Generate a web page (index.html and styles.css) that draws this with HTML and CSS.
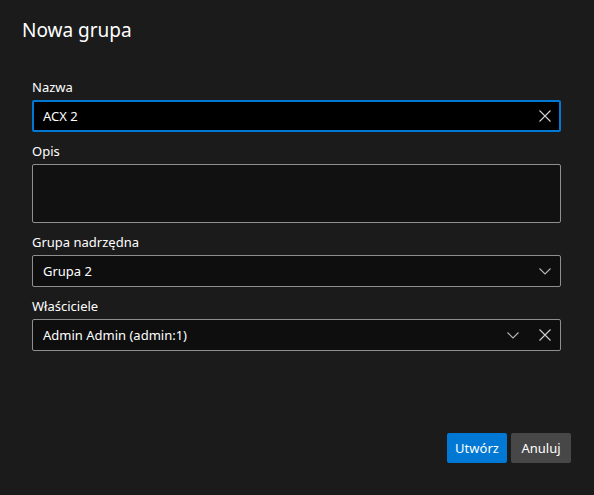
FILE: index.html
```html
<!DOCTYPE html>
<html lang="pl">
<head>
<meta charset="utf-8">
<title>Nowa grupa</title>
<link rel="stylesheet" href="styles.css">
</head>
<body>
<div class="dialog">
  <h1 class="title">Nowa grupa</h1>
  <div class="form">
    <div class="field">
      <label class="label">Nazwa</label>
      <div class="control focused">
        <span class="value">ACX 2</span>
        <span class="icons">
          <svg class="icon" width="12" height="12" viewBox="0 0 12 12"><path d="M0.5 0.5L11.5 11.5M11.5 0.5L0.5 11.5" stroke="#d0d0d0" stroke-width="1.1" fill="none"/></svg>
        </span>
      </div>
    </div>
    <div class="field">
      <label class="label">Opis</label>
      <div class="control textarea"></div>
    </div>
    <div class="field">
      <label class="label">Grupa nadrzędna</label>
      <div class="control select">
        <span class="value">Grupa 2</span>
        <span class="icons">
          <svg class="icon" width="12" height="7" viewBox="0 0 12 7"><path d="M0.5 0.5L6 6L11.5 0.5" stroke="#b8b8b8" stroke-width="1.1" fill="none"/></svg>
        </span>
      </div>
    </div>
    <div class="field">
      <label class="label">Właściciele</label>
      <div class="control select">
        <span class="value">Admin Admin (admin:1)</span>
        <span class="icons">
          <svg class="icon" width="12" height="7" viewBox="0 0 12 7"><path d="M0.5 0.5L6 6L11.5 0.5" stroke="#b8b8b8" stroke-width="1.1" fill="none"/></svg>
          <svg class="icon" width="12" height="12" viewBox="0 0 12 12"><path d="M0.5 0.5L11.5 11.5M11.5 0.5L0.5 11.5" stroke="#d0d0d0" stroke-width="1.1" fill="none"/></svg>
        </span>
      </div>
    </div>
  </div>
  <div class="actions">
    <button class="btn primary">Utwórz</button>
    <button class="btn secondary">Anuluj</button>
  </div>
</div>
</body>
</html>
```

FILE: styles.css
```css
html, body {
  margin: 0;
  padding: 0;
  background: #1b1b1b;
}
body {
  font-family: "Noto Sans", "Open Sans", sans-serif;
  color: #ffffff;
  width: 594px;
  height: 495px;
  overflow: hidden;
}
.dialog {
  display: flex;
  flex-direction: column;
  height: 495px;
  box-sizing: border-box;
  padding: 16px 23px 0 22px;
}
.title {
  margin: 0;
  font-size: 19px;
  line-height: 28px;
  font-weight: 400;
  color: #ffffff;
}
.form {
  margin-top: 33px;
  padding: 0 10px 0 10px;
  display: flex;
  flex-direction: column;
  gap: 9px;
}
.field {
  display: flex;
  flex-direction: column;
}
.label {
  font-size: 13px;
  line-height: 20px;
  margin-bottom: 3px;
  color: #ffffff;
}
.control {
  box-sizing: border-box;
  height: 32px;
  border: 1px solid #8f8f8f;
  border-radius: 2px;
  background: #0e0e0e;
  display: flex;
  align-items: center;
  padding: 0 9px 0 10px;
  font-size: 13px;
  color: #ffffff;
}
.control.focused {
  border: 2px solid #0078d4;
  background: #000000;
  padding: 0 8px 0 9px;
}
.control.textarea {
  height: 59px;
  background: #111111;
}
.value {
  flex: 1;
}
.icons {
  display: flex;
  align-items: center;
  gap: 20px;
}
.icon {
  display: block;
}
.actions {
  margin-top: auto;
  margin-bottom: 32px;
  display: flex;
  justify-content: flex-end;
  gap: 4px;
}
.btn {
  font-family: "Noto Sans", "Open Sans", sans-serif;
  font-size: 13px;
  height: 30px;
  width: 60px;
  border: none;
  border-radius: 2px;
  color: #ffffff;
  padding: 0;
}
.btn.primary {
  background: #0078d4;
}
.btn.secondary {
  background: #474747;
}
```
